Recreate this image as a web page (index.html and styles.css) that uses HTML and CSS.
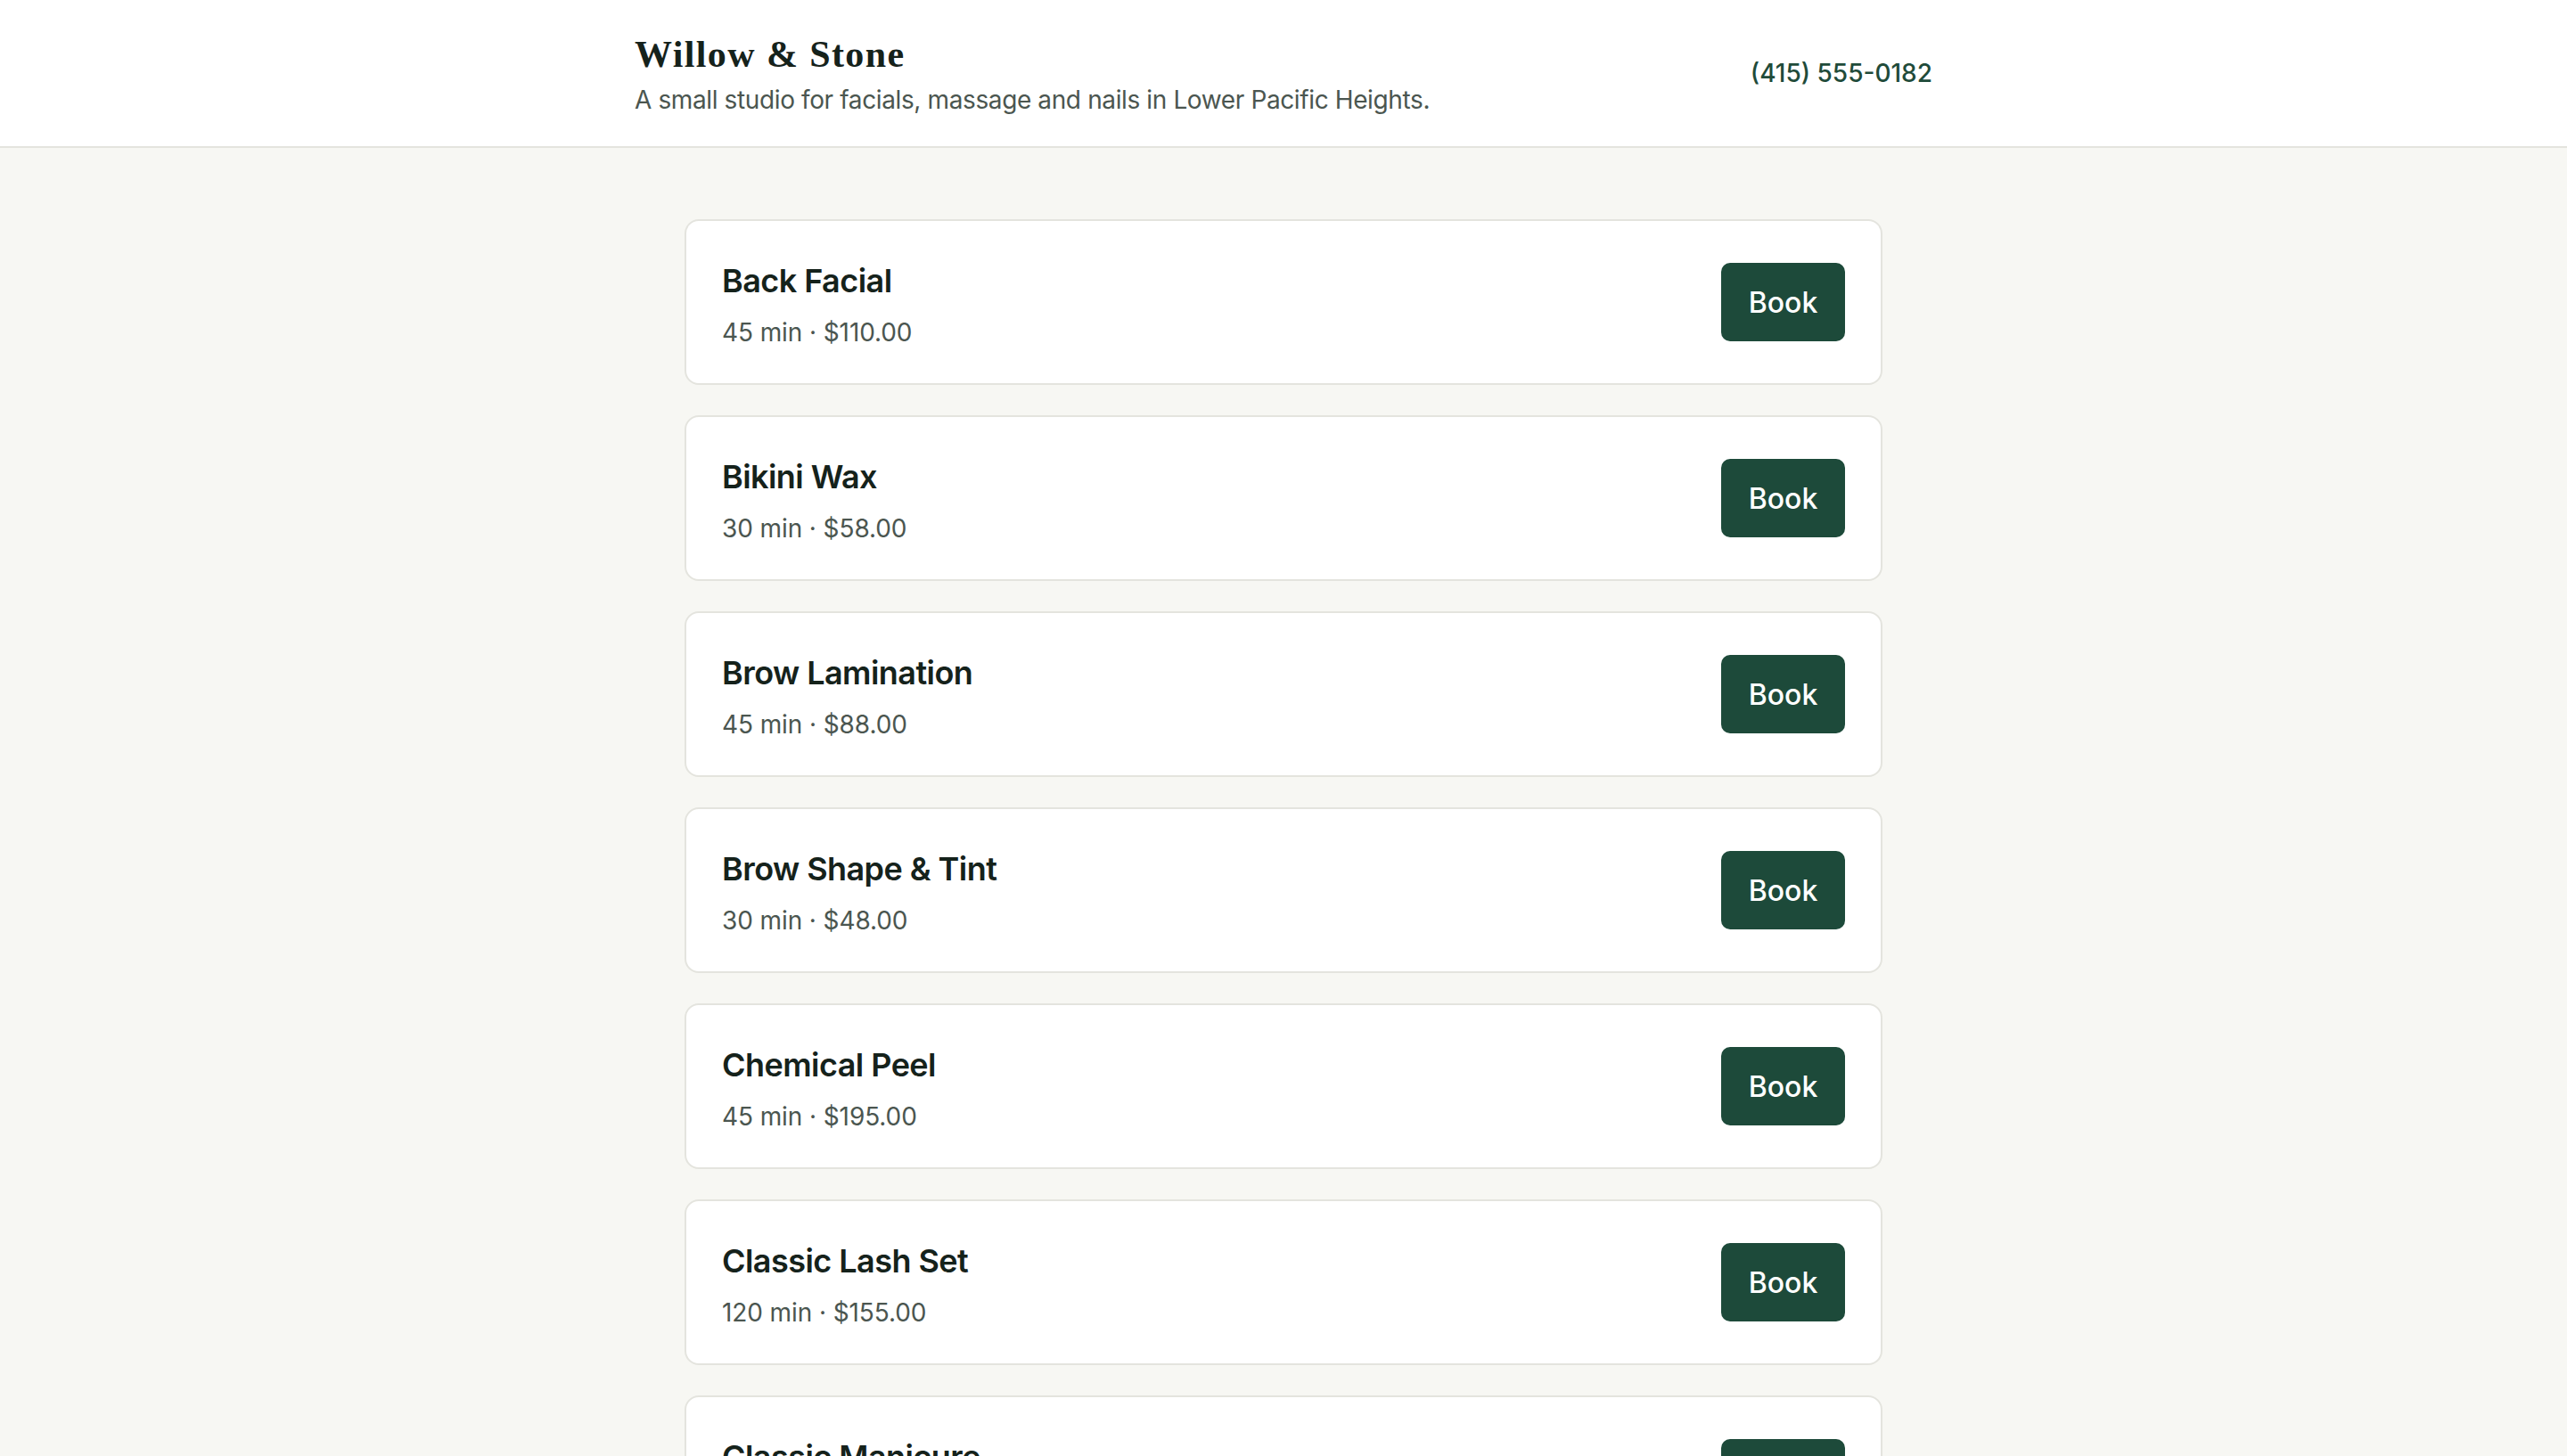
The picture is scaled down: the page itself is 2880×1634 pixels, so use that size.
FILE: index.html
```html
<!DOCTYPE html>
<html lang="en">
<head>
<meta charset="utf-8">
<title>Willow &amp; Stone</title>
<link rel="stylesheet" href="styles.css">
</head>
<body>
<header class="site-header">
  <div class="header-inner">
    <div class="brand">
      <h1 class="brand-name">Willow &amp; Stone</h1>
      <p class="brand-tagline">A small studio for facials, massage and nails in Lower Pacific Heights.</p>
    </div>
    <a class="phone" href="#">(415) 555-0182</a>
  </div>
</header>
<main class="services">
  <ul class="service-list">
    <li class="service-card">
      <div class="service-info">
        <h2 class="service-name">Back Facial</h2>
        <p class="service-meta">45 min · $110.00</p>
      </div>
      <button class="book-btn" type="button">Book</button>
    </li>
    <li class="service-card">
      <div class="service-info">
        <h2 class="service-name">Bikini Wax</h2>
        <p class="service-meta">30 min · $58.00</p>
      </div>
      <button class="book-btn" type="button">Book</button>
    </li>
    <li class="service-card">
      <div class="service-info">
        <h2 class="service-name">Brow Lamination</h2>
        <p class="service-meta">45 min · $88.00</p>
      </div>
      <button class="book-btn" type="button">Book</button>
    </li>
    <li class="service-card">
      <div class="service-info">
        <h2 class="service-name">Brow Shape &amp; Tint</h2>
        <p class="service-meta">30 min · $48.00</p>
      </div>
      <button class="book-btn" type="button">Book</button>
    </li>
    <li class="service-card">
      <div class="service-info">
        <h2 class="service-name">Chemical Peel</h2>
        <p class="service-meta">45 min · $195.00</p>
      </div>
      <button class="book-btn" type="button">Book</button>
    </li>
    <li class="service-card">
      <div class="service-info">
        <h2 class="service-name">Classic Lash Set</h2>
        <p class="service-meta">120 min · $155.00</p>
      </div>
      <button class="book-btn" type="button">Book</button>
    </li>
    <li class="service-card">
      <div class="service-info">
        <h2 class="service-name">Classic Manicure</h2>
        <p class="service-meta">45 min · $45.00</p>
      </div>
      <button class="book-btn" type="button">Book</button>
    </li>
  </ul>
</main>
</body>
</html>
```
FILE: styles.css
```css
* {
  box-sizing: border-box;
}

html, body {
  margin: 0;
  padding: 0;
}

body {
  background: #f7f7f3;
  font-family: Inter, "Noto Sans", "Liberation Sans", sans-serif;
  color: #17241d;
}

.site-header {
  background: #ffffff;
  border-bottom: 2px solid #e4e4de;
}

.header-inner {
  width: 1456px;
  margin: 0 auto;
  padding: 36px 0 31px;
  display: flex;
  justify-content: space-between;
  align-items: center;
}

.brand-name {
  margin: 0;
  font-family: "Liberation Serif", "DejaVu Serif", serif;
  font-weight: 700;
  font-size: 42px;
  line-height: 1.2;
  letter-spacing: 1.4px;
  color: #15221b;
}

.brand-tagline {
  margin: 5px 0 0;
  font-size: 28px;
  line-height: 1.5;
  letter-spacing: -0.38px;
  color: #4b5650;
}

.phone {
  font-size: 28px;
  font-weight: 500;
  line-height: 1.2;
  margin-bottom: 3px;
  color: #1f4b3a;
  text-decoration: none;
}

.services {
  padding: 80px 0;
}

.service-list {
  list-style: none;
  margin: 0 auto;
  padding: 0;
  width: 1344px;
  display: flex;
  flex-direction: column;
  gap: 34px;
}

.service-card {
  height: 186px;
  background: #ffffff;
  border: 2px solid #e4e4de;
  border-radius: 16px;
  padding: 0 40px 0 40px;
  display: flex;
  justify-content: space-between;
  align-items: center;
}

.service-name {
  margin: 0;
  font-size: 36px;
  font-weight: 600;
  line-height: 1.5;
  letter-spacing: -0.55px;
  color: #15221b;
}

.service-meta {
  margin: 15px 0 0;
  font-size: 28px;
  line-height: 1.2;
  letter-spacing: -0.1px;
  color: #4b5650;
}

.book-btn {
  width: 139px;
  height: 88px;
  border: none;
  border-radius: 10px;
  background: #1d4a3a;
  color: #ffffff;
  font-family: inherit;
  font-size: 32px;
  font-weight: 500;
  cursor: pointer;
}
```
